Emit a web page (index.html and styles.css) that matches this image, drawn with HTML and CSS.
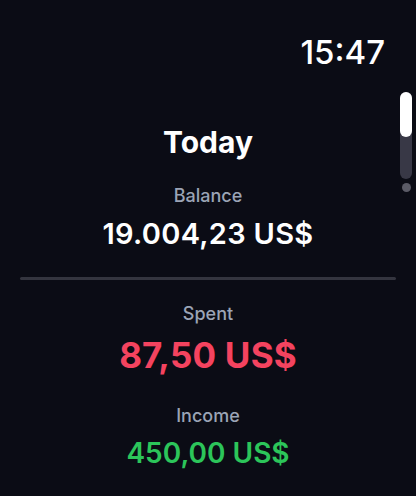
FILE: index.html
```html
<!DOCTYPE html>
<html lang="en">

<head>
  <meta charset="UTF-8">
  <meta name="viewport" content="width=device-width, initial-scale=1.0">
  <title>Today</title>

  <link rel="stylesheet" href="styles.css">
</head>

<body>
  <div class="watch-screen">
    <div class="status-bar">
      <span class="clock">15:47</span>
    </div>

    <div class="scroll-indicator">
      <div class="scroll-track">
        <div class="scroll-thumb"></div>
      </div>
      <div class="scroll-dot"></div>
    </div>

    <main class="summary">
      <h1 class="summary-title">Today</h1>

      <div class="stat">
        <div class="stat-label">Balance</div>
        <div class="stat-value balance">19.004,23 US$</div>
      </div>

      <hr class="divider">

      <div class="stat">
        <div class="stat-label">Spent</div>
        <div class="stat-value spent">87,50 US$</div>
      </div>

      <div class="stat income-stat">
        <div class="stat-label">Income</div>
        <div class="stat-value income">450,00 US$</div>
      </div>
    </main>
  </div>
</body>

</html>
```

FILE: styles.css
```css
* {
  box-sizing: border-box;
}

body {
  margin: 0;
  background: #0b0c15;
  font-family: Inter, "Noto Sans", sans-serif;
  color: #f5f6fa;
}

.watch-screen {
  position: relative;
  width: 416px;
  height: 496px;
  overflow: hidden;
}

.status-bar {
  display: flex;
  justify-content: flex-end;
  padding: 32px 31px 0 0;
}

.clock {
  font-size: 33px;
  line-height: 40px;
  font-weight: 500;
  color: #fff;
}

.scroll-indicator {
  position: absolute;
  top: 92px;
  right: 4px;
  width: 12px;
  display: flex;
  flex-direction: column;
  align-items: center;
  gap: 4px;
}

.scroll-track {
  width: 12px;
  height: 87px;
  border-radius: 6px;
  background: #383846;
}

.scroll-thumb {
  height: 45px;
  border-radius: 6px;
  background: #fff;
}

.scroll-dot {
  width: 9px;
  height: 9px;
  border-radius: 50%;
  background: #5b5b66;
}

.summary {
  display: flex;
  flex-direction: column;
  align-items: center;
  padding: 0 20px;
}

.summary-title {
  margin: 52px 0 0;
  font-size: 30px;
  line-height: 36px;
  font-weight: 700;
  color: #fff;
}

.stat {
  display: flex;
  flex-direction: column;
  align-items: center;
}

.stat-label {
  font-size: 18px;
  line-height: 22px;
  font-weight: 500;
  color: #9ba4b6;
}

.stat-value {
  margin-top: 9px;
}

.summary-title + .stat {
  margin-top: 25px;
}

.balance {
  margin-top: 10px;
  font-size: 29px;
  line-height: 34px;
  font-weight: 600;
  letter-spacing: 0.3px;
  color: #fff;
}

.divider {
  align-self: stretch;
  margin: 26px 0 0;
  height: 3px;
  border: 0;
  border-radius: 2px;
  background: #34353f;
}

.divider + .stat {
  margin-top: 23px;
}

.spent {
  font-size: 35px;
  line-height: 42px;
  font-weight: 700;
  letter-spacing: 0.2px;
  color: #f4435f;
}

.income-stat {
  margin-top: 29px;
}

.income {
  font-size: 28px;
  line-height: 34px;
  font-weight: 600;
  color: #2cc55a;
}
```
